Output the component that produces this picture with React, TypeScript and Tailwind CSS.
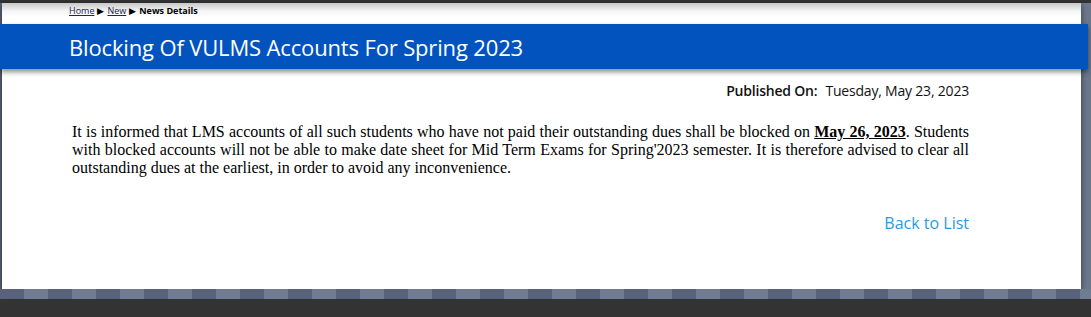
export default function App() {
  return (
    <div className="w-full h-[317px] bg-[#333333] overflow-hidden font-['Open_Sans',sans-serif]">
      <div className="h-[3px]" />
      <div className="relative bg-[linear-gradient(90deg,#5a6579,#6b778b)] h-[296px]">
        {/* main white panel */}
        <div className="ml-[2px] w-[1079px] h-[286px] bg-[linear-gradient(180deg,#c8c8c8_0px,#f4f4f4_8px,#ffffff_14px)] shadow-[0_2px_6px_rgba(0,0,0,0.5)]">
          {/* breadcrumb */}
          <div className="h-[21px] pl-[67px] pb-[6px] text-[9px] leading-[12px] text-black flex items-center gap-[3px]">
            <a className="underline text-[#24244f]">Home</a>
            <span className="text-[9px]">▶</span>
            <a className="underline text-[#24244f]">New</a>
            <span className="text-[9px]">▶</span>
            <span className="font-bold">News Details</span>
          </div>
          {/* title bar */}
          <div className="-ml-[2px] w-[1088px] h-[45px] bg-[#0353be] flex items-center pl-[69px] shadow-[0_3px_5px_rgba(0,0,0,0.45)]">
            <h1 className="text-white text-[22px] leading-none tracking-[-0.15px]">
              Blocking Of VULMS Accounts For Spring 2023
            </h1>
          </div>
          {/* published */}
          <div className="pr-[112px] pt-[13px] flex justify-end items-baseline text-[14px] leading-[18px] text-[#111]">
            <span className="font-semibold tracking-[-0.2px]">Published On:</span>
            <span className="ml-[8px] tracking-[-0.2px]">Tuesday, May 23, 2023</span>
          </div>
          {/* body */}
          <p className="mt-[23px] pl-[70px] pr-[112px] text-justify font-['Liberation_Serif',serif] text-[16px] leading-[18px] text-black">
            It is informed that LMS accounts of all such students who have not paid their outstanding dues shall be
            blocked on <b className="underline">May 26, 2023</b>. Students with blocked accounts will not be able to make
            date sheet for Mid Term Exams for Spring'2023 semester. It is therefore advised to clear all outstanding
            dues at the earliest, in order to avoid any inconvenience.
          </p>
          <div className="pr-[112px] mt-[36px] flex justify-end">
            <a className="text-[16px] leading-[20px] text-[#2b9ae0]">Back to List</a>
          </div>
        </div>
        {/* checkered footer strip */}
        <div className="h-[10px] bg-[repeating-linear-gradient(90deg,#56637a_0px,#56637a_24px,#6f7c92_24px,#6f7c92_48px)]" />
      </div>
    </div>
  );
}
